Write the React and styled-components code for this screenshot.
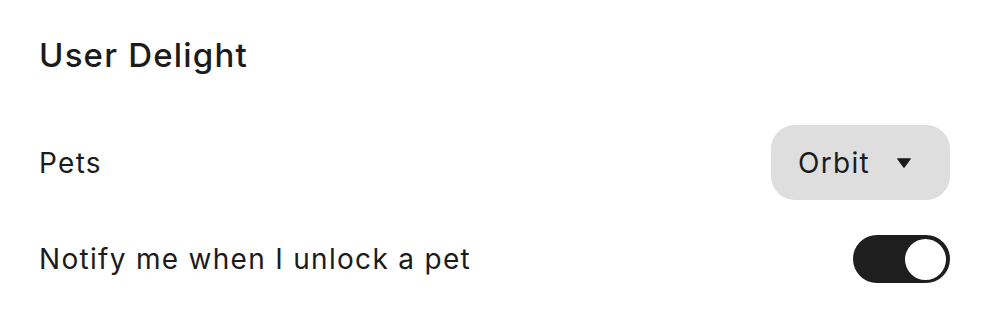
import React, { useState } from 'react'
import styled, { createGlobalStyle } from 'styled-components'

const GlobalStyle = createGlobalStyle`
  body {
    margin: 0;
    background: #ffffff;
    font-family: Inter, 'Noto Sans', sans-serif;
    color: #1b1b1b;
  }
`

function App() {
  const [notify, setNotify] = useState(true)

  return (
    <>
      <GlobalStyle />
      <Section>
        <Heading>User Delight</Heading>
        <Row $height={75}>
          <Label>Pets</Label>
          <Select type='button'>
            Orbit
            <svg width='24' height='24' viewBox='0 0 24 24'>
              <path
                d='M5.6 7.2 H18.4 Q19.4 7.2 18.8 8 L12.8 16.2 Q12 17.2 11.2 16.2 L5.2 8 Q4.6 7.2 5.6 7.2 Z'
                fill='#1b1b1b'
              />
            </svg>
          </Select>
        </Row>
        <Row $height={48} $top={35}>
          <Label>Notify me when I unlock a pet</Label>
          <Toggle
            type='button'
            aria-pressed={notify}
            $on={notify}
            onClick={() => setNotify(!notify)}
          >
            <Knob $on={notify} />
          </Toggle>
        </Row>
      </Section>
    </>
  )
}

const Section = styled.div`
  display: flex;
  flex-direction: column;
  padding: 35px 36px 0 39px;
`

const Heading = styled.h2`
  margin: 0 0 50px 0;
  font-size: 33px;
  line-height: 40px;
  font-weight: 500;
  letter-spacing: 1.2px;
`

const Row = styled.div`
  display: flex;
  align-items: center;
  justify-content: space-between;
  height: ${(p) => p.$height}px;
  margin-top: ${(p) => p.$top || 0}px;
`

const Label = styled.span`
  font-size: 28px;
  line-height: 34px;
  font-weight: 400;
  letter-spacing: 1.3px;
`

const Select = styled.button`
  display: flex;
  align-items: center;
  gap: 22px;
  height: 75px;
  padding: 0 34px 0 27px;
  border: 0;
  border-radius: 24px;
  background: #dedede;
  color: #1b1b1b;
  font-family: Inter, 'Noto Sans', sans-serif;
  font-size: 28px;
  font-weight: 400;
  letter-spacing: 1.3px;
  cursor: pointer;
`

const Toggle = styled.button`
  position: relative;
  width: 97px;
  height: 48px;
  padding: 0;
  border: 0;
  border-radius: 24px;
  background: ${(p) => (p.$on ? '#1e1e1e' : '#cfcfcf')};
  cursor: pointer;
`

const Knob = styled.span`
  position: absolute;
  top: 3.5px;
  left: ${(p) => (p.$on ? '52px' : '4px')};
  width: 41px;
  height: 41px;
  border-radius: 50%;
  background: #ffffff;
`

export default App
